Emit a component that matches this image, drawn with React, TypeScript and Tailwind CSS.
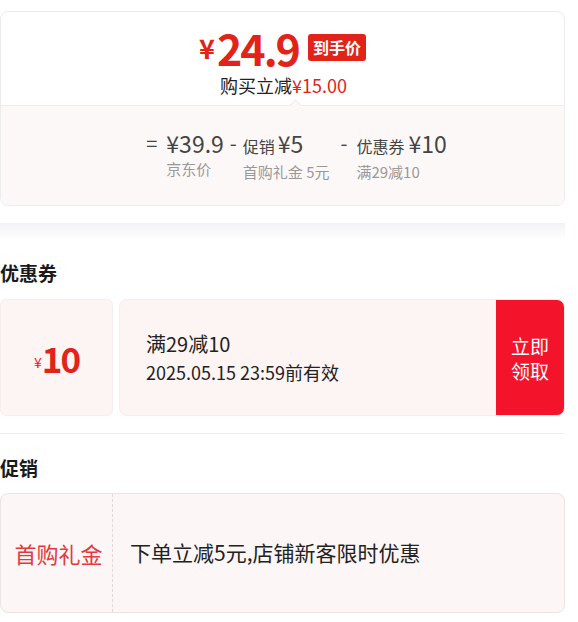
import React from 'react'

const font = "font-['Noto_Sans_CJK_SC','Noto_Sans',sans-serif]"

function PriceCard() {
	return (
		<div className="rounded-lg border border-[#ececec] bg-white">
			<div className="flex h-[93px] flex-col items-center pt-[13px]">
				<div className="flex h-[44px] items-center">
					<span className="text-[27px] leading-none font-bold text-[#e2231a]">¥</span>
					<span className="ml-[2px] text-[43px] leading-none font-bold tracking-[-2px] text-[#e2231a]">
						24.9
					</span>
					<span className="ml-[9px] flex h-[27px] items-center rounded-[3px] bg-[#e2231a] px-[5px] text-[16px] leading-none font-bold text-white">
						到手价
					</span>
				</div>
				<div className="mt-[6px] pl-[2px] text-[18px] leading-[20px] text-[#222]">
					购买立减<span className="text-[#e2231a]">¥15.00</span>
				</div>
			</div>
			<div className="relative flex h-[100px] flex-col items-center justify-center rounded-b-lg border-t border-[#f3eaea] bg-[#fdf8f8]">
				<div className="absolute -top-[5px] left-[290px] h-[9px] w-[9px] rotate-45 border-t border-l border-[#f3eaea] bg-[#fdf8f8]" />
				<div className="flex items-start pl-[28px] text-[#444]">
					<span className="mr-[9px] text-[20px] leading-[26px]">=</span>
					<div className="flex flex-col">
						<span className="text-[23px] leading-[26px]">¥39.9</span>
						<span className="mt-[3px] text-[15px] leading-[20px] text-[#999]">京东价</span>
					</div>
					<span className="mr-[6px] ml-[6px] text-[20px] leading-[26px]">-</span>
					<div className="flex flex-col">
						<span className="leading-[26px]">
							<span className="text-[16px]">促销</span>
							<span className="ml-[3px] text-[23px]">¥5</span>
						</span>
						<span className="mt-[3px] text-[15px] leading-[20px] text-[#999]">首购礼金 5元</span>
					</div>
					<span className="mr-[9px] ml-[11px] text-[20px] leading-[26px]">-</span>
					<div className="flex flex-col">
						<span className="leading-[26px]">
							<span className="text-[16px]">优惠券</span>
							<span className="ml-[4px] text-[23px]">¥10</span>
						</span>
						<span className="mt-[3px] text-[15px] leading-[20px] text-[#999]">满29减10</span>
					</div>
				</div>
			</div>
		</div>
	)
}

function Coupon() {
	return (
		<div className="flex h-[117px] gap-[6px]">
			<div className="flex w-[113px] items-center justify-center rounded-[6px] border border-[#f7eded] bg-[#fdf4f4] text-[#e2231a]">
				<span className="mt-[8px] text-[14px] leading-none">¥</span>
				<span className="text-[35px] leading-none font-bold tracking-[-2px]">10</span>
			</div>
			<div className="flex flex-1 overflow-hidden rounded-[8px] border border-[#f7eded] bg-[#fdf4f4]">
				<div className="flex flex-1 flex-col justify-center pl-[26px] text-[#222]">
					<span className="text-[20px] leading-[26px]">满29减10</span>
					<span className="mt-[3px] text-[18px] leading-[24px]">2025.05.15 23:59前有效</span>
				</div>
				<div className="flex w-[68px] flex-col items-center justify-center bg-[#f3132b] text-[19px] leading-[25px] text-white">
					<span>立即</span>
					<span>领取</span>
				</div>
			</div>
		</div>
	)
}

function Promo() {
	return (
		<div className="flex h-[120px] rounded-lg border border-[#ece3e3] bg-[#fdf6f6]">
			<div className="flex w-[112px] items-center justify-center border-r border-dashed border-[#e8d6d6] pl-[4px] text-[22px] text-[#e4393c]">
				首购礼金
			</div>
			<div className="flex flex-1 items-center pl-[17px] text-[21px] text-[#222]">
				下单立减5元,店铺新客限时优惠
			</div>
		</div>
	)
}

export default function App() {
	return (
		<div className={`h-[622px] w-[578px] overflow-hidden bg-white pt-[11px] pr-[13px] ${font}`}>
			<PriceCard />
			<div className="mt-[17px] h-[18px] bg-linear-to-b from-[#f2f3f7] to-white" />
			<div className="mt-[22px] text-[19px] leading-[20px] font-bold text-[#1a1a1a]">优惠券</div>
			<div className="mt-[16px]">
				<Coupon />
			</div>
			<div className="mt-[17px] h-px bg-[#efefef]" />
			<div className="mt-[24px] text-[19px] leading-[20px] font-bold text-[#1a1a1a]">促销</div>
			<div className="mt-[15px]">
				<Promo />
			</div>
		</div>
	)
}
